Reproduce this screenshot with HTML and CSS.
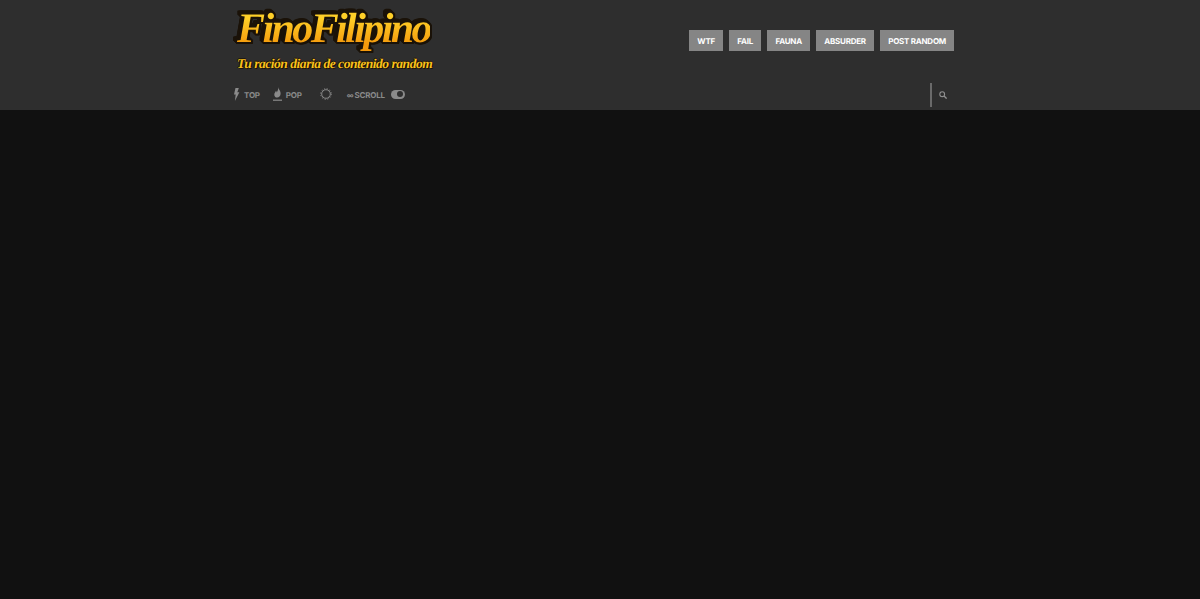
FILE: index.html
```html
<!DOCTYPE html>
<html lang="es">
<head>
  <meta charset="UTF-8">
  <meta name="viewport" content="width=device-width, initial-scale=1.0">
  <title>FinoFilipino</title>
  <link rel="stylesheet" href="styles.css">
</head>
<body>
  <header class="site-header">
    <div class="header-top">
      <a class="logo" href="#">
        <span class="logo-name">FinoFilipino</span>
        <span class="logo-tagline">Tu ración diaria de contenido random</span>
      </a>
      <nav class="main-nav">
        <a href="#">WTF</a>
        <a href="#">FAIL</a>
        <a href="#">FAUNA</a>
        <a href="#">ABSURDER</a>
        <a href="#">POST RANDOM</a>
      </nav>
    </div>
    <div class="header-bottom">
      <a class="sub-link sub-top" href="#">
        <svg width="7" height="13" viewBox="0 0 7 14"><path d="M2.4 0 L6 0 L4.4 4.6 L6.6 4.6 L1.8 14 L2.6 7 L0.8 7 Z" fill="#8a8a8a"/></svg>
        TOP
      </a>
      <a class="sub-link sub-pop" href="#">
        <svg width="9" height="14" viewBox="0 0 9 14"><path d="M5.2 0 C5.4 2.4 8 3.8 7.6 7 C7.3 9.2 6 10.6 4.2 10.6 C2.4 10.6 1.2 9.2 1.3 7.4 C1.4 5.8 2.6 5 3 3.8 C3.5 4.2 3.7 4.8 3.7 5.4 C4.7 4.2 5.4 2.2 5.2 0 Z" fill="#8a8a8a"/><rect y="12.6" width="9" height="1.2" fill="#8a8a8a"/></svg>
        POP
      </a>
      <a class="sub-link sub-sun" href="#">
        <svg width="12" height="12" viewBox="0 0 12 12"><circle cx="6" cy="6" r="4.3" fill="none" stroke="#8a8a8a" stroke-width="1"/><circle cx="6" cy="6" r="5.3" fill="none" stroke="#8a8a8a" stroke-width="1" stroke-dasharray="1.2 1.58"/></svg>
      </a>
      <span class="sub-link sub-scroll">
        <span class="infinity">∞</span> SCROLL
        <span class="toggle"><span class="knob"></span></span>
      </span>
      <a class="search" href="#">
        <svg width="8" height="8" viewBox="0 0 8 8"><circle cx="3.2" cy="3.2" r="2.4" fill="none" stroke="#8f8f8f" stroke-width="1.1"/><path d="M5 5 L7.6 7.6" stroke="#8f8f8f" stroke-width="1.3"/></svg>
      </a>
    </div>
  </header>
</body>
</html>
```
FILE: styles.css
```css
* {
  margin: 0;
  padding: 0;
  box-sizing: border-box;
}

body {
  background-color: #111;
  font-family: 'Inter', Arial, sans-serif;
  text-rendering: geometricPrecision;
  height: 599px;
  overflow: hidden;
}

a {
  color: inherit;
  text-decoration: none;
}

.site-header {
  height: 110px;
  background-color: #2e2e2e;
  padding: 0 246px 0 232px;
}

.header-top {
  display: flex;
  justify-content: space-between;
  height: 83px;
}

/* Logo */
.logo {
  display: flex;
  flex-direction: column;
  align-items: flex-start;
  padding: 7px 0 0 5px;
}

.logo-name {
  font-family: 'Liberation Serif', serif;
  font-style: italic;
  font-weight: bold;
  font-size: 42px;
  line-height: 44px;
  letter-spacing: -2.6px;
  background: linear-gradient(#ffd028 25%, #f59a0c 85%);
  -webkit-background-clip: text;
  background-clip: text;
  color: transparent;
  filter: drop-shadow(1.5px 0 0 #1a1208) drop-shadow(-1.5px 0 0 #1a1208) drop-shadow(0 1.5px 0 #1a1208) drop-shadow(0 -1.5px 0 #1a1208) drop-shadow(1.5px 1.5px 0 #1a1208) drop-shadow(-1.5px -1.5px 0 #1a1208);
}

.logo-tagline {
  font-family: 'Liberation Serif', serif;
  font-style: italic;
  font-weight: bold;
  font-size: 13.5px;
  line-height: 16px;
  letter-spacing: -0.47px;
  margin-top: 5px;
  white-space: nowrap;
  color: #fbc21a;
  text-shadow: 1px 1px 0 #1a1208, -1px 0 0 #1a1208, 0 -1px 0 #1a1208;
}

/* Main nav */
.main-nav {
  display: flex;
  gap: 6.4px;
  padding-top: 29.5px;
  align-items: flex-start;
}

.main-nav a {
  height: 21.5px;
  line-height: 23px;
  padding: 0 8px;
  background-color: #858585;
  color: #fff;
  font-size: 8px;
  font-weight: 700;
  letter-spacing: -0.25px;
  white-space: nowrap;
}

/* Sub bar */
.header-bottom {
  display: flex;
  align-items: center;
  height: 24px;
  color: #8a8a8a;
  font-size: 8px;
  font-weight: 700;
  letter-spacing: -0.2px;
}

.sub-link {
  display: flex;
  align-items: center;
  gap: 4px;
}

.sub-link svg,
.toggle {
  margin-bottom: 2px;
}

.sub-top {
  margin-left: 1px;
}

.sub-pop {
  margin-left: 13px;
}

.sub-sun {
  margin-left: 18px;
}

.sub-scroll {
  margin-left: 15px;
}

.infinity {
  font-size: 7px;
  margin-right: -3px;
}

.toggle {
  position: relative;
  width: 14px;
  height: 9px;
  margin-left: 2px;
  border-radius: 5px;
  background-color: #8a8a8a;
}

.knob {
  position: absolute;
  top: 1.5px;
  right: 1.5px;
  width: 6px;
  height: 6px;
  border-radius: 50%;
  background-color: #2e2e2e;
}

.search {
  display: flex;
  align-items: center;
  height: 24px;
  margin-left: auto;
  padding: 0 0 0 7px;
  border-left: 2px solid #6a6a6a;
  width: 24px;
}
```
